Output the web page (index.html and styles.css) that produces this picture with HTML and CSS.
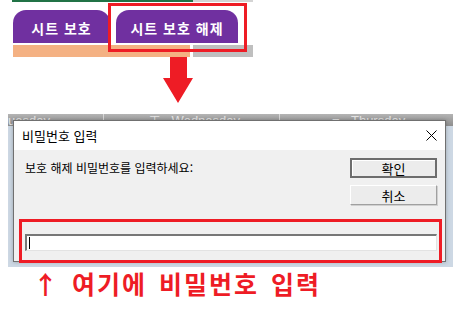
FILE: index.html
```html
<!DOCTYPE html>
<html lang="ko">
<head>
    <meta charset="UTF-8">
    <title>시트 보호 해제</title>
    <link rel="stylesheet" href="styles.css">
</head>
<body>
    <div class="page">
        <div class="topline">
            <div class="topline-green"></div>
            <div class="topline-grey"></div>
        </div>

        <div class="tabs">
            <div class="tab tab-first">시트 보호</div>
            <div class="tab tab-second">시트 보호 해제</div>
        </div>
        <div class="strip">
            <div class="strip-orange"></div>
            <div class="strip-grey"></div>
        </div>
        <div class="mark mark-tab"></div>

        <svg class="arrow" width="30" height="46" viewBox="0 0 30 46">
            <polygon points="7,0 24,0 24,21 30,21 15,46 0,21 7,21" fill="#ee1c25"/>
        </svg>

        <div class="screen">
            <div class="cal-head">
                <span class="day day-tue">uesday</span>
                <span class="divider"></span>
                <span class="day day-wed"><b class="glyph">⊤</b> Wednesday</span>
                <span class="divider"></span>
                <span class="day day-thu"><b class="glyph">=</b> Thursday</span>
            </div>

            <div class="dialog">
                <div class="dialog-title">
                    <span>비밀번호 입력</span>
                    <svg class="close" width="11" height="11" viewBox="0 0 11 11">
                        <path d="M0.5 0.5 L10.5 10.5 M10.5 0.5 L0.5 10.5" stroke="#000" stroke-width="1" fill="none"/>
                    </svg>
                </div>
                <div class="dialog-body">
                    <div class="dialog-row">
                        <div class="prompt">보호 해제 비밀번호를 입력하세요:</div>
                        <div class="buttons">
                            <div class="btn btn-default">확인</div>
                            <div class="btn">취소</div>
                        </div>
                    </div>
                    <div class="input"><span class="caret"></span></div>
                </div>
            </div>
            <div class="mark mark-input"></div>
        </div>

        <div class="note">↑ 여기에 비밀번호 입력</div>
    </div>
</body>
</html>
```

FILE: styles.css
```css
body {
    margin: 0;
    background: #fff;
    font-family: "Noto Sans CJK KR", "Noto Sans", sans-serif;
}

.page {
    position: relative;
    width: 466px;
    height: 336px;
    overflow: hidden;
}

/* sheet tabs */
.topline {
    display: flex;
    height: 2px;
}

.topline-green {
    margin-left: 12px;
    width: 181px;
    background: #217346;
}

.topline-grey {
    width: 60px;
    background: #d4d4d4;
}

.tabs {
    display: flex;
    gap: 6px;
    margin-top: 8px;
    padding-left: 13px;
}

.tab {
    height: 33px;
    background: #7030a0;
    border-radius: 13px 13px 0 0;
    color: #fff;
    font-weight: bold;
    font-size: 14px;
    letter-spacing: 1px;
    display: flex;
    align-items: center;
    justify-content: center;
    padding-top: 2px;
    box-sizing: border-box;
}

.tab-first {
    width: 97px;
}

.tab-second {
    width: 122px;
}

.strip {
    display: flex;
    margin-top: 2px;
    height: 12px;
    padding-left: 13px;
}

.strip-orange {
    width: 177px;
    background: #f4b183;
}

.strip-grey {
    margin-left: 3px;
    width: 60px;
    background: #bfbfbf;
}

.mark {
    position: absolute;
    border: 3px solid #ee1c25;
    box-sizing: border-box;
}

.mark-tab {
    left: 108px;
    top: 3px;
    width: 139px;
    height: 49px;
}

.arrow {
    display: block;
    margin-left: 163px;
}

/* screenshot of the dialog */
.screen {
    position: relative;
    margin: 11px 0 0 8px;
    width: 445px;
    height: 153px;
    background: #cdd8e4;
}

.cal-head {
    display: flex;
    align-items: flex-start;
    height: 12px;
    background: linear-gradient(#b4b4b4, #8e8e8e);
    color: #e6e6e6;
    font-family: "Liberation Sans", sans-serif;
    font-size: 13px;
    white-space: nowrap;
    overflow: hidden;
}

.day {
    line-height: 14px;
}

.day-tue {
    width: 95px;
}

.day-wed {
    width: 130px;
    padding-left: 45px;
}

.day-thu {
    padding-left: 52px;
}

.glyph {
    font-weight: normal;
    margin-right: 8px;
}

.divider {
    width: 1px;
    height: 12px;
    background: #d8d8d8;
}

.dialog {
    position: absolute;
    left: 5px;
    top: 6px;
    width: 433px;
    height: 142px;
    border: 1px solid #707070;
    box-sizing: border-box;
    background: #f0f0f0;
    box-shadow: 0 0 4px rgba(0, 0, 0, 0.25);
    display: flex;
    flex-direction: column;
}

.dialog-title {
    height: 29px;
    background: #fff;
    display: flex;
    align-items: center;
    justify-content: space-between;
    padding: 0 8px 0 8px;
    font-size: 13px;
    color: #000;
}

.dialog-body {
    flex: 1;
    padding: 8px 8px 0 11px;
}

.dialog-row {
    display: flex;
    justify-content: space-between;
}

.prompt {
    font-size: 12px;
    line-height: 20px;
    color: #000;
}

.buttons {
    display: flex;
    flex-direction: column;
    gap: 7px;
}

.btn {
    width: 87px;
    height: 20px;
    box-sizing: border-box;
    background: #ececec;
    border: 1px solid;
    border-color: #fff #a0a0a0 #a0a0a0 #fff;
    box-shadow: 1px 1px 0 #d0d0d0;
    font-size: 13px;
    display: flex;
    align-items: center;
    justify-content: center;
    color: #000;
}

.btn-default {
    border: 2px solid #6d6d6d;
    box-shadow: inset 1px 1px 0 #fff;
}

.input {
    margin-top: 29px;
    height: 17px;
    background: #fff;
    border-style: solid;
    border-width: 2px 1px 1px 2px;
    border-color: #777 #e3e3e3 #e3e3e3 #777;
    box-sizing: border-box;
    display: flex;
    align-items: center;
    padding-left: 2px;
}

.caret {
    width: 1px;
    height: 12px;
    background: #000;
}

.mark-input {
    left: 11px;
    top: 105px;
    width: 423px;
    height: 44px;
}

.note {
    margin: 2px 0 0 33px;
    color: #ee1c25;
    font-size: 25px;
    font-weight: bold;
    line-height: 29px;
    letter-spacing: 2px;
    word-spacing: 3px;
}
```
